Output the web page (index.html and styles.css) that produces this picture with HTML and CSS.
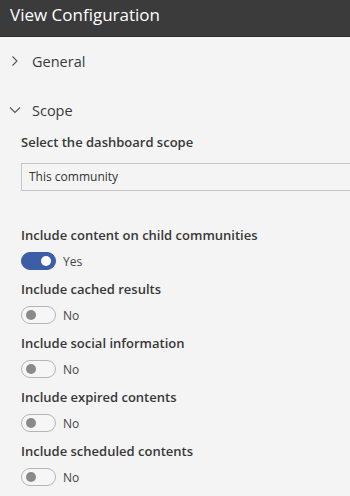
FILE: index.html
```html
<!DOCTYPE html>
<html>
<head>
  <meta charset="utf-8">
  <meta name="viewport" content="width=device-width, initial-scale=1">
  <title>View Configuration</title>
  <link rel="stylesheet" href="styles.css">
</head>
<body>
  <div id="title-bar">View Configuration</div>

  <div class="section">
    <div class="section-head">
      <svg class="chevron" width="12" height="12" viewBox="0 0 12 12"><path d="M3.5 1.5 L8 6 L3.5 10.5" fill="none" stroke="#555" stroke-width="1.1"/></svg>
      <span>General</span>
    </div>
  </div>

  <div class="section open">
    <div class="section-head">
      <svg class="chevron" width="12" height="12" viewBox="0 0 12 12"><path d="M1 3.5 L6 8.5 L11 3.5" fill="none" stroke="#555" stroke-width="1.1"/></svg>
      <span>Scope</span>
    </div>

    <div class="section-body">
      <div class="field-label">Select the dashboard scope</div>
      <div class="text-input">This community</div>

      <div class="option first">
        <div class="field-label">Include content on child communities</div>
        <label class="toggle">
          <input type="checkbox" checked>
          <span class="track"></span>
          <span class="state">Yes</span>
        </label>
      </div>

      <div class="option">
        <div class="field-label">Include cached results</div>
        <label class="toggle">
          <input type="checkbox">
          <span class="track"></span>
          <span class="state">No</span>
        </label>
      </div>

      <div class="option">
        <div class="field-label">Include social information</div>
        <label class="toggle">
          <input type="checkbox">
          <span class="track"></span>
          <span class="state">No</span>
        </label>
      </div>

      <div class="option">
        <div class="field-label">Include expired contents</div>
        <label class="toggle">
          <input type="checkbox">
          <span class="track"></span>
          <span class="state">No</span>
        </label>
      </div>

      <div class="option">
        <div class="field-label">Include scheduled contents</div>
        <label class="toggle">
          <input type="checkbox">
          <span class="track"></span>
          <span class="state">No</span>
        </label>
      </div>
    </div>
  </div>
</body>
</html>
```

FILE: styles.css
```css
body {
  margin: 0;
  padding: 0;
  background-color: #f4f4f4;
  font-family: "Open Sans", "Noto Sans", sans-serif;
  color: #333;
  overflow: hidden;
}

#title-bar {
  height: 36px;
  padding-left: 10px;
  background-color: #3b3b3b;
  border-bottom: 1px solid #2c2c2c;
  color: #fff;
  font-size: 17px;
  line-height: 30px;
  white-space: nowrap;
}

.section-head {
  display: flex;
  align-items: center;
  height: 48px;
  padding-left: 9px;
  font-size: 14.5px;
  color: #3a3a3a;
}

.section-head .chevron {
  width: 12px;
  margin-right: 11px;
}

.section:first-of-type {
  border-bottom: 1px solid #d9d9d9;
  margin-left: 7px;
}

.section:first-of-type .section-head {
  padding-left: 2px;
}

.section.open .section-head {
  height: 42px;
  padding-top: 4px;
}

.section-body {
  padding-left: 21px;
  padding-top: 2px;
}

.field-label {
  font-size: 13px;
  font-weight: 600;
  color: #383838;
  line-height: 18px;
  white-space: nowrap;
}

.text-input {
  margin-top: 12px;
  height: 26px;
  border: 1px solid #c6c6c6;
  border-right: none;
  padding-left: 7px;
  font-size: 12px;
  line-height: 25px;
  color: #333;
}

.option {
  height: 54px;
}

.option.first {
  margin-top: 35px;
}

/* toggle switch */
.toggle {
  display: flex;
  align-items: center;
  margin-top: 8px;
  height: 18px;
}

.toggle input {
  display: none;
}

.toggle .track {
  position: relative;
  width: 33px;
  height: 16px;
  border: 1px solid #b5b5b5;
  border-radius: 9px;
  background-color: #f6f6f6;
}

.toggle .track:before {
  position: absolute;
  content: "";
  width: 10px;
  height: 10px;
  top: 3px;
  left: 4px;
  border-radius: 50%;
  background-color: #8a8a8a;
}

.toggle input:checked + .track {
  background-color: #3b5ea6;
  border-color: #3b5ea6;
}

.toggle input:checked + .track:before {
  left: 19px;
  background-color: #fff;
}

.toggle .state {
  margin-left: 7px;
  font-size: 12px;
  color: #444;
}
```
